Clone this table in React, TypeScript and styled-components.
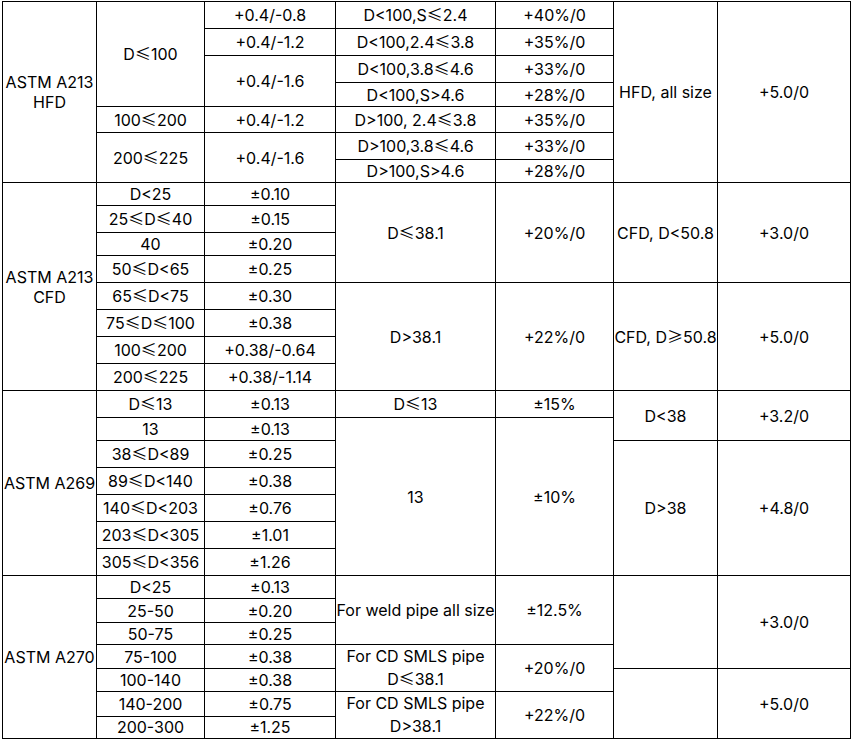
import React from 'react';
import styled, { createGlobalStyle } from 'styled-components';

type CellDef = { t: string; rs?: number; lh?: number };
type RowDef = { h: number; cells: CellDef[] };

const GlobalStyle = createGlobalStyle`
  html, body {
    margin: 0;
    padding: 0;
    background: #ffffff;
  }
  body {
    font-family: Inter, "Noto Sans CJK SC", sans-serif;
    color: #000000;
  }
`;

const columns = [94, 108, 131, 160, 118, 104, 133];

const rows: RowDef[] = [
  // ASTM A213 HFD
  {
    h: 27,
    cells: [
      { t: 'ASTM A213\nHFD', rs: 7 },
      { t: 'D≤100', rs: 4 },
      { t: '+0.4/-0.8' },
      { t: 'D<100,S≤2.4' },
      { t: '+40%/0' },
      { t: 'HFD, all size', rs: 7 },
      { t: '+5.0/0', rs: 7 },
    ],
  },
  { h: 27, cells: [{ t: '+0.4/-1.2' }, { t: 'D<100,2.4≤3.8' }, { t: '+35%/0' }] },
  { h: 27, cells: [{ t: '+0.4/-1.6', rs: 2 }, { t: 'D<100,3.8≤4.6' }, { t: '+33%/0' }] },
  { h: 24, cells: [{ t: 'D<100,S>4.6' }, { t: '+28%/0' }] },
  { h: 26, cells: [{ t: '100≤200' }, { t: '+0.4/-1.2' }, { t: 'D>100, 2.4≤3.8' }, { t: '+35%/0' }] },
  { h: 27, cells: [{ t: '200≤225', rs: 2 }, { t: '+0.4/-1.6', rs: 2 }, { t: 'D>100,3.8≤4.6' }, { t: '+33%/0' }] },
  { h: 23, cells: [{ t: 'D>100,S>4.6' }, { t: '+28%/0' }] },

  // ASTM A213 CFD
  {
    h: 23,
    cells: [
      { t: 'ASTM A213\nCFD', rs: 8 },
      { t: 'D<25' },
      { t: '±0.10' },
      { t: 'D≤38.1', rs: 4 },
      { t: '+20%/0', rs: 4 },
      { t: 'CFD, D<50.8', rs: 4 },
      { t: '+3.0/0', rs: 4 },
    ],
  },
  { h: 27, cells: [{ t: '25≤D≤40' }, { t: '±0.15' }] },
  { h: 23, cells: [{ t: '40' }, { t: '±0.20' }] },
  { h: 27, cells: [{ t: '50≤D<65' }, { t: '±0.25' }] },
  {
    h: 27,
    cells: [
      { t: '65≤D<75' },
      { t: '±0.30' },
      { t: 'D>38.1', rs: 4 },
      { t: '+22%/0', rs: 4 },
      { t: 'CFD, D≥50.8', rs: 4 },
      { t: '+5.0/0', rs: 4 },
    ],
  },
  { h: 27, cells: [{ t: '75≤D≤100' }, { t: '±0.38' }] },
  { h: 27, cells: [{ t: '100≤200' }, { t: '+0.38/-0.64' }] },
  { h: 27, cells: [{ t: '200≤225' }, { t: '+0.38/-1.14' }] },

  // ASTM A269
  {
    h: 27,
    cells: [
      { t: 'ASTM A269', rs: 7 },
      { t: 'D≤13' },
      { t: '±0.13' },
      { t: 'D≤13' },
      { t: '±15%' },
      { t: 'D<38', rs: 2 },
      { t: '+3.2/0', rs: 2 },
    ],
  },
  { h: 23, cells: [{ t: '13' }, { t: '±0.13' }, { t: '13', rs: 6 }, { t: '±10%', rs: 6 }] },
  { h: 27, cells: [{ t: '38≤D<89' }, { t: '±0.25' }, { t: 'D>38', rs: 5 }, { t: '+4.8/0', rs: 5 }] },
  { h: 27, cells: [{ t: '89≤D<140' }, { t: '±0.38' }] },
  { h: 27, cells: [{ t: '140≤D<203' }, { t: '±0.76' }] },
  { h: 27, cells: [{ t: '203≤D<305' }, { t: '±1.01' }] },
  { h: 27, cells: [{ t: '305≤D<356' }, { t: '±1.26' }] },

  // ASTM A270
  {
    h: 23,
    cells: [
      { t: 'ASTM A270', rs: 7 },
      { t: 'D<25' },
      { t: '±0.13' },
      { t: 'For weld pipe all size', rs: 3 },
      { t: '±12.5%', rs: 3 },
      { t: '', rs: 4 },
      { t: '+3.0/0', rs: 4 },
    ],
  },
  { h: 24, cells: [{ t: '25-50' }, { t: '±0.20' }] },
  { h: 22, cells: [{ t: '50-75' }, { t: '±0.25' }] },
  {
    h: 24,
    cells: [
      { t: '75-100' },
      { t: '±0.38' },
      { t: 'For CD SMLS pipe\nD≤38.1', rs: 2, lh: 23 },
      { t: '+20%/0', rs: 2 },
    ],
  },
  { h: 23, cells: [{ t: '100-140' }, { t: '±0.38' }, { t: '', rs: 3 }, { t: '+5.0/0', rs: 3 }] },
  {
    h: 24,
    cells: [
      { t: '140-200' },
      { t: '±0.75' },
      { t: 'For CD SMLS pipe\nD>38.1', rs: 2, lh: 23 },
      { t: '+22%/0', rs: 2 },
    ],
  },
  { h: 22, cells: [{ t: '200-300' }, { t: '±1.25' }] },
];

const Table = styled.table`
  margin: 1px 0 0 2px;
  width: 849px;
  table-layout: fixed;
  border-collapse: collapse;
  font-size: 16px;
`;

const Row = styled.tr<{ $h: number }>`
  height: ${(p) => p.$h}px;
`;

const Cell = styled.td<{ $lh: number }>`
  border: 1px solid #000000;
  padding: 0;
  text-align: center;
  vertical-align: middle;
  white-space: nowrap;
  line-height: ${(p) => p.$lh}px;
`;

// CJK font draws ≤ / ≥ with the slanted bar seen in the table
const Sym = styled.span`
  font-family: "Noto Sans CJK SC", sans-serif;
  line-height: 0;
`;

function renderText(text: string) {
  return text.split('\n').map((line, i) => (
    <React.Fragment key={i}>
      {i > 0 && <br />}
      {line.split(/([≤≥])/).map((part, j) =>
        part === '≤' || part === '≥' ? <Sym key={j}>{part}</Sym> : part
      )}
    </React.Fragment>
  ));
}

export default function App() {
  return (
    <>
      <GlobalStyle />
      <Table>
        <colgroup>
          {columns.map((w, i) => (
            <col key={i} style={{ width: w }} />
          ))}
        </colgroup>
        <tbody>
          {rows.map((row, r) => (
            <Row key={r} $h={row.h}>
              {row.cells.map((c, k) => (
                <Cell key={k} rowSpan={c.rs} $lh={c.lh ?? 20}>
                  {renderText(c.t)}
                </Cell>
              ))}
            </Row>
          ))}
        </tbody>
      </Table>
    </>
  );
}
